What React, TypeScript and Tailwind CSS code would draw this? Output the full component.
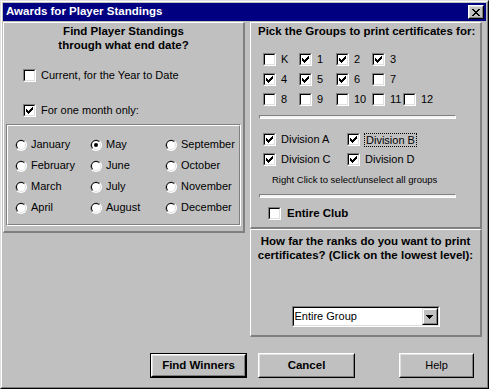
import React from 'react';

const CHECK_PATH =
  'M6 0h1v1h-1z M5 1h2v1h-2z M0 2h1v1h-1z M4 2h3v1h-3z M0 3h2v1h-2z M3 3h3v1h-3z M0 4h5v1h-5z M1 5h3v1h-3z M2 6h1v1h-1z';

const CLOSE_PATH =
  'M0 0h2v1h-2z M6 0h2v1h-2z M1 1h2v1h-2z M5 1h2v1h-2z M2 2h4v1h-4z M3 3h2v1h-2z M2 4h4v1h-4z M1 5h2v1h-2z M5 5h2v1h-2z M0 6h2v1h-2z M6 6h2v1h-2z';

const CheckBox: React.FC<{ checked?: boolean }> = ({ checked }) => (
  <span className="flex h-[13px] w-[13px] shrink-0 border border-t-[#808080] border-l-[#808080] border-b-white border-r-white">
    <span className="flex flex-1 items-center justify-center border border-t-black border-l-black border-b-[#dfdfdf] border-r-[#dfdfdf] bg-white">
      {checked && (
        <svg width="7" height="7" viewBox="0 0 7 7" shapeRendering="crispEdges">
          <path d={CHECK_PATH} fill="#000" />
        </svg>
      )}
    </span>
  </span>
);

const Radio: React.FC<{ checked?: boolean }> = ({ checked }) => (
  <svg width="12" height="12" viewBox="0 0 12 12" className="shrink-0">
    <circle cx="6" cy="6" r="6" fill="#fff" />
    <path d="M1.76 10.24 A6 6 0 0 1 10.24 1.76 L6 6 Z" fill="#808080" />
    <circle cx="6" cy="6" r="5" fill="#dfdfdf" />
    <path d="M2.46 9.54 A5 5 0 0 1 9.54 2.46 L6 6 Z" fill="#000" />
    <circle cx="6" cy="6" r="4" fill="#fff" />
    {checked && <circle cx="6" cy="6" r="2" fill="#000" />}
  </svg>
);

const Groove = () => (
  <div className="ml-[8px] h-[4px] w-[197px] border border-t-[#808080] border-l-[#808080] border-b-white border-r-white bg-[#f4f4f4]" />
);

const months = [
  ['January', 'May', 'September'],
  ['February', 'June', 'October'],
  ['March', 'July', 'November'],
  ['April', 'August', 'December'],
];

const groupRows: { label: string; checked: boolean }[][] = [
  [
    { label: 'K', checked: false },
    { label: '1', checked: true },
    { label: '2', checked: true },
    { label: '3', checked: true },
  ],
  [
    { label: '4', checked: true },
    { label: '5', checked: true },
    { label: '6', checked: true },
    { label: '7', checked: false },
  ],
  [
    { label: '8', checked: false },
    { label: '9', checked: false },
    { label: '10', checked: false },
    { label: '11', checked: false },
    { label: '12', checked: false },
  ],
];

const colWidths = ['w-[36px]', 'w-[37px]', 'w-[36px]', 'w-[31px]', 'w-auto'];

export default function App() {
  return (
    <div className="h-[389px] w-[489px] border border-t-[#dfdfdf] border-l-[#dfdfdf] border-b-black border-r-black bg-[#c0c0c0] font-['Liberation_Sans',Arial,sans-serif] text-[11px] text-black">
      <div className="flex h-full flex-col border border-t-white border-l-white border-b-[#808080] border-r-[#808080] p-[1px]">
        {/* title bar */}
        <div className="flex h-[18px] shrink-0 items-center justify-between bg-[#000080] pl-[3px] pr-[2px]">
          <span className="text-[11.5px] font-bold leading-none text-white">Awards for Player Standings</span>
          <span className="flex h-[14px] w-[16px] border border-t-white border-l-white border-b-black border-r-black">
            <span className="flex flex-1 items-center justify-center border border-t-[#dfdfdf] border-l-[#dfdfdf] border-b-[#808080] border-r-[#808080] bg-[#c0c0c0]">
              <svg width="8" height="7" viewBox="0 0 8 7" shapeRendering="crispEdges">
                <path d={CLOSE_PATH} fill="#000" />
              </svg>
            </span>
          </span>
        </div>

        <div className="mt-[1px] flex items-start gap-[5px]">
          {/* left panel */}
          <div className="flex h-[211px] w-[242px] flex-col border-l border-t border-l-white border-t-white border-r-2 border-b-2 border-r-[#808080] border-b-[#808080]">
            <div className="pt-[1px] text-center text-[11.5px] font-bold leading-[14px]">
              Find Player Standings
              <br />
              through what end date?
            </div>
            <div className="mt-[17px] flex h-[13px] items-center gap-[5px] pl-[19px]">
              <CheckBox />
              <span>Current, for the Year to Date</span>
            </div>
            <div className="mt-[22px] flex h-[13px] items-center gap-[5px] pl-[19px]">
              <CheckBox checked />
              <span>For one month only:</span>
            </div>
            <div className="mx-[2px] mt-[7px] border border-t-[#808080] border-l-[#808080] border-b-white border-r-white">
              <div className="grid grid-cols-[75px_75px_75px] border border-t-white border-l-white border-b-[#808080] border-r-[#808080] pb-[6px] pl-[7px] pt-[8px]">
                {months.flat().map((m) => (
                  <div key={m} className="flex h-[21px] items-center gap-[4px]">
                    <Radio checked={m === 'May'} />
                    <span>{m}</span>
                  </div>
                ))}
              </div>
            </div>
          </div>

          {/* right column */}
          <div className="flex w-[232px] flex-col">
            <div className="flex h-[207px] flex-col border-l border-t border-l-white border-t-white border-r-2 border-b-2 border-r-[#808080] border-b-[#808080]">
              <div className="whitespace-nowrap pl-[7px] pt-[1px] text-[11.5px] font-bold leading-[14px]">
                Pick the Groups to print certificates for:
              </div>
              <div className="mt-[15px] flex flex-col gap-[7px] pl-[12px]">
                {groupRows.map((row, ri) => (
                  <div key={ri} className="flex">
                    {row.map((g, ci) => (
                      <div key={g.label} className={`${colWidths[ci]} flex h-[13px] items-center gap-[5px]`}>
                        <CheckBox checked={g.checked} />
                        <span>{g.label}</span>
                      </div>
                    ))}
                  </div>
                ))}
              </div>
              <div className="mt-[9px]">
                <Groove />
              </div>
              <div className="mt-[14px] grid grid-cols-[84px_84px] gap-y-[7px] pl-[12px]">
                <div className="flex h-[13px] items-center gap-[5px]">
                  <CheckBox checked />
                  <span>Division A</span>
                </div>
                <div className="flex h-[13px] items-center gap-[4px]">
                  <CheckBox checked />
                  <span className="border border-dotted border-black px-[1px] leading-[12px]">Division B</span>
                </div>
                <div className="flex h-[13px] items-center gap-[5px]">
                  <CheckBox checked />
                  <span>Division C</span>
                </div>
                <div className="flex h-[13px] items-center gap-[5px]">
                  <CheckBox checked />
                  <span>Division D</span>
                </div>
              </div>
              <div className="mt-[8px] pl-[21px] text-[9.5px] leading-[12px]">Right Click to select/unselect all groups</div>
              <div className="mt-[8px]">
                <Groove />
              </div>
              <div className="mt-[9px] flex h-[13px] items-center gap-[6px] pl-[17px]">
                <CheckBox />
                <span className="text-[11.5px] font-bold">Entire Club</span>
              </div>
            </div>

            <div className="flex h-[108px] flex-col border-l border-t border-l-white border-t-white border-r-2 border-b-2 border-r-[#808080] border-b-[#808080]">
              <div className="pt-[4px] text-center text-[11.5px] font-bold leading-[14px] whitespace-nowrap">
                How far the ranks do you want to print
                <br />
                certificates? (Click on the lowest level):
              </div>
              <div className="mx-auto mt-[44px] flex h-[21px] w-[148px] border border-t-[#808080] border-l-[#808080] border-b-white border-r-white">
                <div className="flex flex-1 items-center border border-t-black border-l-black border-b-[#dfdfdf] border-r-[#dfdfdf] bg-white pl-[1px]">
                  <span className="flex-1">Entire Group</span>
                  <span className="flex h-[17px] w-[16px] border border-t-[#dfdfdf] border-l-[#dfdfdf] border-b-black border-r-black">
                    <span className="flex flex-1 items-center justify-center border border-t-white border-l-white border-b-[#808080] border-r-[#808080] bg-[#c0c0c0]">
                      <svg width="7" height="4" viewBox="0 0 7 4" shapeRendering="crispEdges">
                        <path d="M0 0h7v1h-7z M1 1h5v1h-5z M2 2h3v1h-3z M3 3h1v1h-1z" fill="#000" />
                      </svg>
                    </span>
                  </span>
                </div>
              </div>
            </div>
          </div>
        </div>

        {/* buttons */}
        <div className="mt-[16px] flex pl-[147px]">
          <button className="flex h-[25px] w-[97px] border border-black">
            <span className="flex flex-1 border border-t-white border-l-white border-b-black border-r-black">
              <span className="flex flex-1 items-center justify-center border border-t-[#dfdfdf] border-l-[#dfdfdf] border-b-[#808080] border-r-[#808080] text-[11.5px] font-bold">
                Find Winners
              </span>
            </span>
          </button>
          <button className="ml-[11px] flex h-[25px] w-[97px] border border-t-white border-l-white border-b-black border-r-black">
            <span className="flex flex-1 items-center justify-center border border-t-[#dfdfdf] border-l-[#dfdfdf] border-b-[#808080] border-r-[#808080] text-[11.5px] font-bold">
              Cancel
            </span>
          </button>
          <button className="ml-[44px] flex h-[25px] w-[75px] border border-t-white border-l-white border-b-black border-r-black">
            <span className="flex flex-1 items-center justify-center border border-t-[#dfdfdf] border-l-[#dfdfdf] border-b-[#808080] border-r-[#808080]">
              Help
            </span>
          </button>
        </div>
      </div>
    </div>
  );
}
